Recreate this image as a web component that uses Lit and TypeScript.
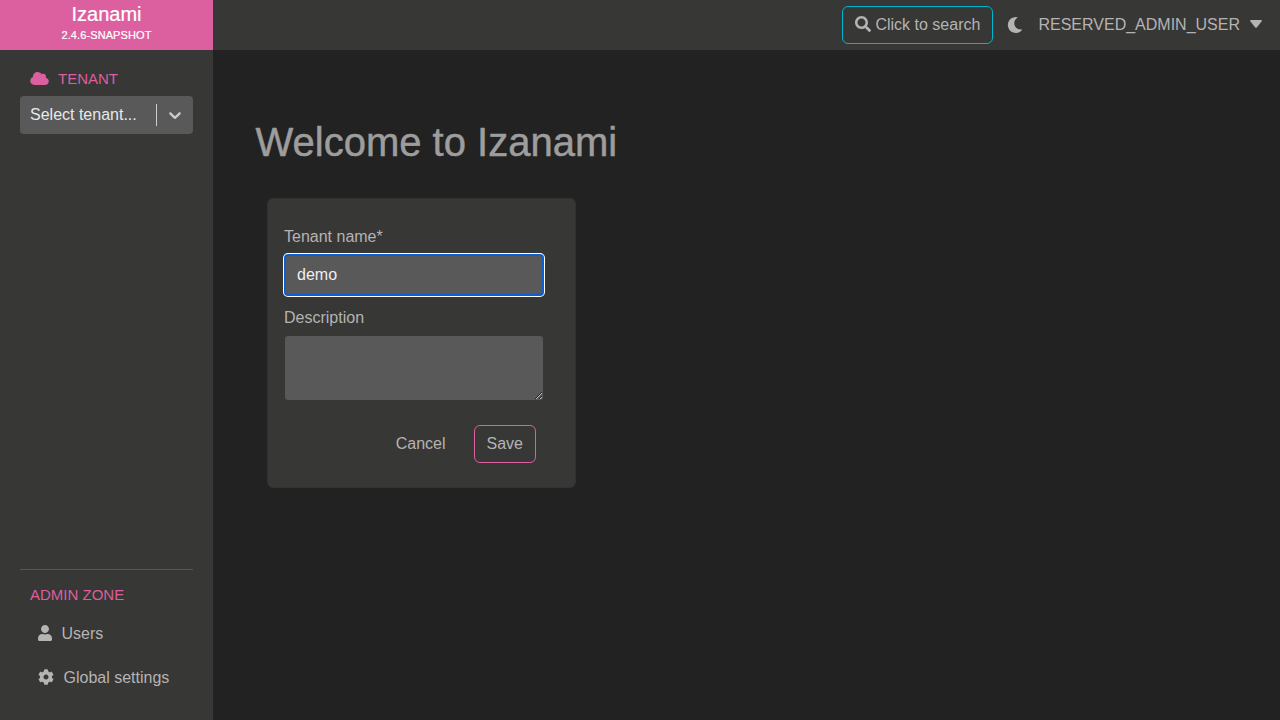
import { LitElement, html, css, svg } from "lit";
import { customElement } from "lit/decorators.js";

const CLOUD = "M0 336c0 79.5 64.5 144 144 144H512c70.7 0 128-57.3 128-128c0-61.9-44-113.6-102.4-125.4c4.1-10.7 6.4-22.4 6.4-34.6c0-53-43-96-96-96c-19.7 0-38.1 6-53.3 16.2C367 64.2 315.3 32 256 32C167.6 32 96 103.6 96 192c0 2.7 .1 5.4 .2 8.1C40.2 219.8 0 273.2 0 336z";
const SEARCH = "M505 442.7L405.3 343c-4.5-4.5-10.6-7-17-7H372c27.6-35.3 44-79.7 44-128C416 93.1 322.9 0 208 0S0 93.1 0 208s93.1 208 208 208c48.3 0 92.7-16.4 128-44v16.3c0 6.4 2.5 12.5 7 17l99.7 99.7c9.4 9.4 24.6 9.4 33.9 0l28.3-28.3c9.4-9.4 9.4-24.6.1-34zM208 336c-70.7 0-128-57.2-128-128 0-70.7 57.2-128 128-128 70.7 0 128 57.2 128 128 0 70.7-57.2 128-128 128z";
const MOON = "M283.211 512c78.962 0 151.079-35.925 198.857-94.792 7.068-8.708-.639-21.43-11.562-19.35-124.203 23.654-238.262-71.576-238.262-196.954 0-72.222 38.662-138.635 101.498-174.394 9.686-5.512 7.25-20.197-3.756-22.23A258.156 258.156 0 0 0 283.211 0c-141.309 0-256 114.511-256 256 0 141.309 114.511 256 256 256z";
const USER = "M224 256c70.7 0 128-57.3 128-128S294.7 0 224 0 96 57.3 96 128s57.3 128 128 128zm89.6 32h-16.7c-22.2 10.2-46.9 16-72.9 16s-50.6-5.8-72.9-16h-16.7C60.2 288 0 348.2 0 422.4V464c0 26.5 21.5 48 48 48h352c26.5 0 48-21.5 48-48v-41.6c0-74.2-60.2-134.4-134.4-134.4z";
const COG = "M487.4 315.7l-42.6-24.6c4.3-23.2 4.3-47 0-70.2l42.6-24.6c4.9-2.8 7.1-8.6 5.5-14-11.1-35.6-30-67.8-54.7-94.6-3.8-4.1-10-5.1-14.8-2.3L380.8 110c-17.9-15.4-38.5-27.3-60.8-35.1V25.8c0-5.6-3.9-10.5-9.4-11.7-36.7-8.2-74.3-7.8-109.2 0-5.5 1.2-9.4 6.1-9.4 11.7V75c-22.2 7.9-42.8 19.8-60.8 35.1L88.7 85.5c-4.9-2.8-11-1.9-14.8 2.3-24.7 26.7-43.6 58.9-54.7 94.6-1.7 5.4.6 11.2 5.5 14L67.3 221c-4.3 23.2-4.3 47 0 70.2l-42.6 24.6c-4.9 2.8-7.1 8.6-5.5 14 11.1 35.6 30 67.8 54.7 94.6 3.8 4.1 10 5.1 14.8 2.3l42.6-24.6c17.9 15.4 38.5 27.3 60.8 35.1v49.2c0 5.6 3.9 10.5 9.4 11.7 36.7 8.2 74.3 7.8 109.2 0 5.5-1.2 9.4-6.1 9.4-11.7v-49.2c22.2-7.9 42.8-19.8 60.8-35.1l42.6 24.6c4.9 2.8 11 1.9 14.8-2.3 24.7-26.7 43.6-58.9 54.7-94.6 1.5-5.5-.7-11.3-5.6-14.1zM256 336c-44.1 0-80-35.9-80-80s35.9-80 80-80 80 35.9 80 80-35.9 80-80 80z";
const CHEVRON = "M4.516 7.548c0.436-0.446 1.043-0.481 1.576 0l3.908 3.747 3.908-3.747c0.533-0.481 1.141-0.446 1.574 0 0.436 0.445 0.408 1.197 0 1.615-0.406 0.418-4.695 4.502-4.695 4.502-0.217 0.223-0.502 0.335-0.787 0.335s-0.57-0.112-0.789-0.335c0 0-4.287-4.084-4.695-4.502s-0.436-1.17 0-1.615z";
const CARET = "M1 0H11Q12.4 .1 11.7 1.3L7 7.3Q6 8.4 5 7.3L.3 1.3Q-.4 .1 1 0Z";

const icon = (d: string, w: number, h: number, viewBox: string) =>
  html`<svg class="icon" width=${w} height=${h} viewBox=${viewBox} aria-hidden="true">${svg`<path d=${d}></path>`}</svg>`;

@customElement("app-root")
export class AppRoot extends LitElement {
  static styles = css`
    :host {
      display: grid;
      grid-template: 50px 1fr / 213px 1fr;
      height: 100vh;
      background: #222;
      color: #b5b3b3;
      font: 16px/24px "Liberation Sans", Arial, sans-serif;
      overflow: hidden;
    }
    * { box-sizing: border-box; }
    .icon { display: block; flex: none; fill: currentColor; }
    .brand {
      background: #dc5f9f;
      color: #fff;
      text-align: center;
      font-size: 20px;
      line-height: 28px;
      -webkit-text-stroke: 0.2px;
    }
    .version { font-size: 11px; line-height: 14px; letter-spacing: 0.1px; }
    .topbar {
      background: #373735;
      display: flex;
      align-items: center;
      justify-content: flex-end;
      padding-right: 18px;
    }
    .search {
      display: flex;
      align-items: center;
      gap: 4px;
      width: 151px;
      height: 38px;
      padding: 0 0 0 12px;
      border: 1px solid #00b5cf;
      border-radius: 6px;
      background: none;
      color: inherit;
      font: inherit;
      white-space: nowrap;
    }
    .search .icon { margin-bottom: 2px; }
    .moon { margin-left: 13.5px; }
    .account { display: flex; align-items: center; gap: 10px; margin-left: 15.5px; }
    .account .icon { margin-bottom: 2px; }
    .sidebar {
      background: #373735;
      display: flex;
      flex-direction: column;
      padding: 17px 20px 20px;
    }
    .heading {
      display: flex;
      align-items: center;
      gap: 9px;
      margin: 0;
      padding-left: 10px;
      color: #dc5f9f;
      font-size: 15px;
      font-weight: 400;
      line-height: 24px;
    }
    .heading .icon { margin-bottom: 1px; }
    .select {
      display: flex;
      align-items: center;
      height: 38px;
      margin-top: 5px;
      padding-left: 10px;
      border-radius: 4px;
      background: #595959;
      color: #e8e8e8;
    }
    .placeholder { flex: 1; white-space: nowrap; }
    .divider { width: 1px; height: 22px; background: #ccc; }
    .indicator { padding: 0 8px; color: #ccc; }
    .admin { margin-top: auto; border-top: 1px solid #545452; padding-top: 13px; }
    .link {
      display: flex;
      align-items: center;
      gap: 9.5px;
      height: 44px;
      padding-left: 18px;
    }
    .link .icon { margin-bottom: 2px; }
    .links { margin-top: 5px; }
    .content { padding: 68px 42px; }
    .title { margin: 0; padding-left: 0.5px; font-size: 40px; line-height: 48px; font-weight: 400; color: #9e9d9d; -webkit-text-stroke: 0.5px; }
    .card {
      width: 309px;
      height: 290px;
      margin: 32px 0 0 12px;
      padding: 26px 16px 24px;
      border: 1px solid #313130;
      border-radius: 6px;
      background: #373735;
    }
    .label { display: block; }
    .input, .area {
      display: block;
      width: 258px;
      border: 0;
      background: #595959;
      color: #efefef;
      font: inherit;
      outline: none;
    }
    .input {
      height: 40px;
      margin: 6px 0 11px 1px;
      padding: 0 11px;
      border-radius: 3px;
      border: 1px solid #0b5fd0;
      box-shadow: 0 0 0 1px #0b5fd0, 0 0 0 2px #fff;
    }
    .area { height: 64px; margin: 6px 0 0 1px; border-radius: 3px; resize: vertical; }
    .actions { display: flex; justify-content: flex-end; gap: 15px; margin: 25px 23px 0 0; }
    .btn {
      height: 38px;
      padding: 0 12px;
      border: 1px solid transparent;
      border-radius: 6px;
      background: none;
      color: inherit;
      font: inherit;
    }
    .btn.save { border-color: #dc5f9f; }
  `;

  render() {
    return html`
      <header class="brand">
        <div>Izanami</div>
        <div class="version">2.4.6-SNAPSHOT</div>
      </header>
      <nav class="topbar">
        <button class="search">${icon(SEARCH, 16, 16, "0 0 512 512")}<span>Click to search</span></button>
        <span class="moon">${icon(MOON, 16, 16, "0 0 512 512")}</span>
        <div class="account">
          <span>RESERVED_ADMIN_USER</span>
          ${icon(CARET, 12, 8, "0 0 12 8")}
        </div>
      </nav>
      <aside class="sidebar">
        <h2 class="heading">${icon(CLOUD, 19, 13, "0 32 640 448")}<span>TENANT</span></h2>
        <div class="select">
          <span class="placeholder">Select tenant...</span>
          <span class="divider"></span>
          <span class="indicator">${icon(CHEVRON, 20, 20, "0 0 20 20")}</span>
        </div>
        <section class="admin">
          <h2 class="heading">ADMIN ZONE</h2>
          <div class="links">
            <div class="link">${icon(USER, 14, 16, "0 0 448 512")}<span>Users</span></div>
            <div class="link">${icon(COG, 16, 16, "0 0 512 512")}<span>Global settings</span></div>
          </div>
        </section>
      </aside>
      <main class="content">
        <h1 class="title">Welcome to Izanami</h1>
        <form class="card">
          <label class="label" for="name">Tenant name*</label>
          <input class="input" id="name" value="demo" />
          <label class="label" for="description">Description</label>
          <textarea class="area" id="description"></textarea>
          <div class="actions">
            <button class="btn" type="button">Cancel</button>
            <button class="btn save" type="button">Save</button>
          </div>
        </form>
      </main>
    `;
  }
}
